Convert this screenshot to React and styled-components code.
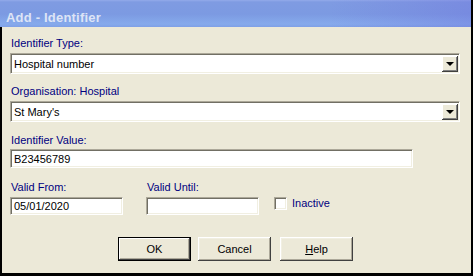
import React from "react";
import styled, { createGlobalStyle } from "styled-components";

const Global = createGlobalStyle`
  html, body { margin: 0; padding: 0; background: #000; }
  body { font-family: "Liberation Sans", Arial, sans-serif; }
`;

const Window = styled.div`
  width: 473px;
  height: 276px;
  box-sizing: border-box;
  border-right: 2px solid #000;
  border-bottom: 3px solid #000;
  display: flex;
  flex-direction: column;
  background: #ece9d8;
`;

const TitleBar = styled.div`
  height: 27px;
  flex: none;
  box-sizing: border-box;
  padding: 8px 0 0 6px;
  background: linear-gradient(
      to bottom,
      #93aaea 0px,
      #7f9be2 2px,
      #7c9ae2 14px,
      #86aaec 24px,
      #7fa0e6 27px
    ),
    #7e9be2;
  position: relative;
  &::after {
    content: "";
    position: absolute;
    inset: 0;
    background: linear-gradient(to right, rgba(130, 160, 235, 0) 70%, rgba(110, 110, 220, 0.35) 100%);
    pointer-events: none;
  }
`;

const Title = styled.span`
  font: bold 13px/15px "Liberation Sans", Arial, sans-serif;
  color: #dde4f6;
  letter-spacing: 0.2px;
`;

const Content = styled.div`
  flex: 1;
  border-left: 2px solid #000;
  padding: 10px 0 0 8px;
  display: flex;
  flex-direction: column;
`;

const Field = styled.div`
  display: flex;
  flex-direction: column;
  gap: ${(p) => p.$gap ?? 3}px;
  margin-top: ${(p) => p.$top ?? 0}px;
`;

const Label = styled.label`
  font-size: 11px;
  line-height: 13px;
  height: 13px;
  color: #000080;
  padding-left: 1px;
  white-space: nowrap;
`;

const Sunken = styled.div`
  box-sizing: border-box;
  width: ${(p) => p.$w}px;
  height: ${(p) => p.$h}px;
  background: #fff;
  border-top: 1px solid #aca899;
  border-left: 1px solid #aca899;
  border-right: 1px solid #fff;
  border-bottom: 1px solid #fff;
  box-shadow: inset 1px 1px 0 #716f64, inset -1px -1px 0 #f1efe2;
  display: flex;
  align-items: center;
  padding: 0 2px 0 3px;
  font-size: 11px;
  color: #000;
`;

const Value = styled.span`
  flex: 1;
  white-space: nowrap;
`;

const DropButton = styled.div`
  width: 16px;
  height: 16px;
  box-sizing: border-box;
  background: #ece9d8;
  box-shadow: inset -1px -1px 0 #404040, inset 1px 1px 0 #fff, inset -2px -2px 0 #808080,
    inset 2px 2px 0 #ece9d8;
  display: flex;
  align-items: center;
  justify-content: center;
  margin-right: -1px;
`;

const Arrow = styled.div`
  width: 0;
  height: 0;
  border-left: 4px solid transparent;
  border-right: 4px solid transparent;
  border-top: 4px solid #000;
  margin-top: 1px;
`;

const Row = styled.div`
  display: flex;
  align-items: flex-start;
  margin-top: 13px;
`;

const CheckWrap = styled.div`
  display: flex;
  align-items: center;
  gap: 5px;
  margin-top: 16px;
  margin-left: 15px;
`;

const CheckBox = styled.div`
  width: 13px;
  height: 13px;
  box-sizing: border-box;
  background: #fff;
  border-top: 1px solid #aca899;
  border-left: 1px solid #aca899;
  border-right: 1px solid #fff;
  border-bottom: 1px solid #fff;
  box-shadow: inset 1px 1px 0 #716f64, inset -1px -1px 0 #f1efe2;
`;

const CheckLabel = styled.span`
  font-size: 11px;
  line-height: 13px;
  color: #000080;
`;

const Buttons = styled.div`
  display: flex;
  margin-top: 22px;
  margin-left: 108px;
  gap: 7px;
`;

const Button = styled.button`
  width: 73px;
  height: 24px;
  box-sizing: border-box;
  margin: 0;
  padding: 0;
  font: 11px "Liberation Sans", Arial, sans-serif;
  color: #000;
  background: #ece9d8;
  border: ${(p) => (p.$default ? "1px solid #000" : "none")};
  box-shadow: ${(p) =>
    p.$default
      ? "inset -1px -1px 0 #404040, inset 1px 1px 0 #fff, inset -2px -2px 0 #aca899"
      : "inset -1px -1px 0 #404040, inset 1px 1px 0 #fff, inset -2px -2px 0 #aca899, inset 2px 2px 0 #f1efe2"};
  margin-left: ${(p) => p.$ml ?? 0}px;
`;

const U = styled.span`
  text-decoration: underline;
`;

export default function App() {
  return (
    <>
      <Global />
      <Window>
        <TitleBar>
          <Title>Add - Identifier</Title>
        </TitleBar>
        <Content>
          <Field>
            <Label>Identifier Type:</Label>
            <Sunken $w={450} $h={21}>
              <Value>Hospital number</Value>
              <DropButton>
                <Arrow />
              </DropButton>
            </Sunken>
          </Field>
          <Field $top={11}>
            <Label>Organisation: Hospital</Label>
            <Sunken $w={450} $h={21}>
              <Value>St Mary's</Value>
              <DropButton>
                <Arrow />
              </DropButton>
            </Sunken>
          </Field>
          <Field $top={12} $gap={2}>
            <Label>Identifier Value:</Label>
            <Sunken $w={403} $h={19}>
              <Value>B23456789</Value>
            </Sunken>
          </Field>
          <Row>
            <Field>
              <Label>Valid From:</Label>
              <Sunken $w={113} $h={18}>
                <Value>05/01/2020</Value>
              </Sunken>
            </Field>
            <Field style={{ marginLeft: 23 }}>
              <Label>Valid Until:</Label>
              <Sunken $w={113} $h={18} />
            </Field>
            <CheckWrap>
              <CheckBox />
              <CheckLabel>Inactive</CheckLabel>
            </CheckWrap>
          </Row>
          <Buttons>
            <Button $default>OK</Button>
            <Button>Cancel</Button>
            <Button $ml={2}>
              <U>H</U>elp
            </Button>
          </Buttons>
        </Content>
      </Window>
    </>
  );
}
